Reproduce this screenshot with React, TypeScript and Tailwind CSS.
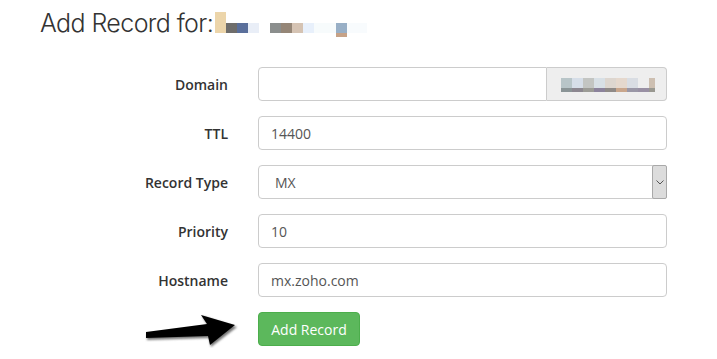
import React from "react";

const font = { fontFamily: '"Open Sans", "Liberation Sans", sans-serif' };

function Row({ label, children }: { label: string; children: React.ReactNode }) {
  return (
    <div className="flex items-center h-[34px] mb-[15px]">
      <div className="w-[228px] text-right text-[14px] font-semibold text-[#333]">{label}</div>
      <div className="ml-[30px] w-[409px] h-[34px]">{children}</div>
    </div>
  );
}

function TextBox({ value }: { value: string }) {
  return (
    <div className="h-full w-full border border-[#ccc] rounded-[4px] bg-white flex items-center pl-[12px] text-[14px] text-[#555]">
      {value}
    </div>
  );
}

function Blocks({ items }: { items: [number, number, number, number, string][] }) {
  return (
    <>
      {items.map(([x, y, w, h, c], i) => (
        <div key={i} className="absolute" style={{ left: x, top: y, width: w, height: h, background: c }} />
      ))}
    </>
  );
}

export default function App() {
  return (
    <div className="w-[717px] h-[359px] bg-white overflow-hidden" style={font}>
      <div className="pl-[40px] pt-[6px] h-[67px]">
        <div className="flex items-start">
          <h1
            className="text-[25px] font-light text-[#333] leading-[34px] tracking-[-0.6px]"
            style={{ fontFamily: 'Inter, "Liberation Sans", sans-serif' }}
          >
            Add Record for:
          </h1>
          <div className="relative w-[160px] h-[34px] ml-[2px]">
            <Blocks
              items={[
                [0, 6, 11, 21, "#ecd5aa"],
                [11, 17, 11, 10, "#6e6d6b"],
                [22, 17, 11, 10, "#5a6f9b"],
                [33, 17, 11, 10, "#e9eef7"],
                [55, 17, 11, 10, "#8b8e8d"],
                [66, 17, 11, 10, "#958677"],
                [77, 17, 11, 10, "#d5c3b3"],
                [88, 17, 11, 10, "#e8f0fb"],
                [99, 17, 22, 10, "#f7fbfc"],
                [121, 17, 11, 10, "#98afc6"],
                [121, 27, 11, 4, "#c6a287"],
                [132, 17, 20, 10, "#f8fbfd"],
              ]}
            />
          </div>
        </div>
      </div>

      <Row label="Domain">
        <div className="flex h-full w-full">
          <div className="flex-1 border border-[#ccc] rounded-l-[4px] bg-white" />
          <div className="w-[120px] border border-l-0 border-[#ccc] rounded-r-[4px] bg-[#eee] relative">
            <Blocks
              items={[
                [14, 10, 11, 10, "#b8c5c8"],
                [25, 10, 11, 10, "#d6dee8"],
                [36, 10, 11, 10, "#c3c5c2"],
                [47, 10, 11, 10, "#d8e0e6"],
                [58, 10, 11, 10, "#ddd6cf"],
                [69, 10, 11, 10, "#e5d8cd"],
                [80, 10, 11, 10, "#d9dde3"],
                [102, 10, 6, 10, "#cdbfb1"],
                [14, 20, 11, 4, "#8a9496"],
                [25, 20, 11, 4, "#8c8790"],
                [36, 20, 11, 4, "#9c9c96"],
                [47, 20, 11, 4, "#8c839c"],
                [58, 20, 11, 4, "#8f8a87"],
                [69, 20, 11, 4, "#c9a68c"],
                [80, 20, 11, 4, "#9a97a6"],
                [91, 20, 11, 4, "#9990a4"],
                [102, 20, 6, 4, "#999890"],
              ]}
            />
          </div>
        </div>
      </Row>

      <Row label="TTL">
        <TextBox value="14400" />
      </Row>

      <Row label="Record Type">
        <div className="h-full w-full border border-[#ccc] rounded-[4px] bg-white flex items-stretch">
          <div className="flex-1 flex items-center pl-[16px] text-[14px] text-[#555]">MX</div>
          <div className="w-[15px] my-[-1px] mr-[-1px] bg-[#dcdcdc] border border-[#a9a9a9] rounded-[2px] flex items-center justify-center">
            <svg width="8" height="5" viewBox="0 0 8 5">
              <path d="M0.5 0.5 L4 4 L7.5 0.5" fill="none" stroke="#555" strokeWidth="1" />
            </svg>
          </div>
        </div>
      </Row>

      <Row label="Priority">
        <TextBox value="10" />
      </Row>

      <Row label="Hostname">
        <TextBox value="mx.zoho.com" />
      </Row>

      <div className="flex items-center h-[34px]">
        <div className="w-[258px] relative h-[34px]">
          <svg className="absolute left-0" width="258" height="40" viewBox="0 310 258 40" style={{ top: -4 }}>
            <defs>
              <filter id="sh" x="-10%" y="-30%" width="120%" height="160%">
                <feGaussianBlur stdDeviation="1.2" />
              </filter>
            </defs>
            <polygon
              points="146,335 207,327 201,317 236,328 210,348 208,339 146,341"
              fill="#777"
              filter="url(#sh)"
              transform="translate(1,1)"
            />
            <polygon points="146,334 207,326 201,317 235,327 210,347 208,338 146,340" fill="#000" />
          </svg>
        </div>
        <button className="w-[102px] h-[34px] bg-[#5cb85c] border border-[#4cae4c] rounded-[4px] text-white text-[14px]">
          Add Record
        </button>
      </div>
    </div>
  );
}
